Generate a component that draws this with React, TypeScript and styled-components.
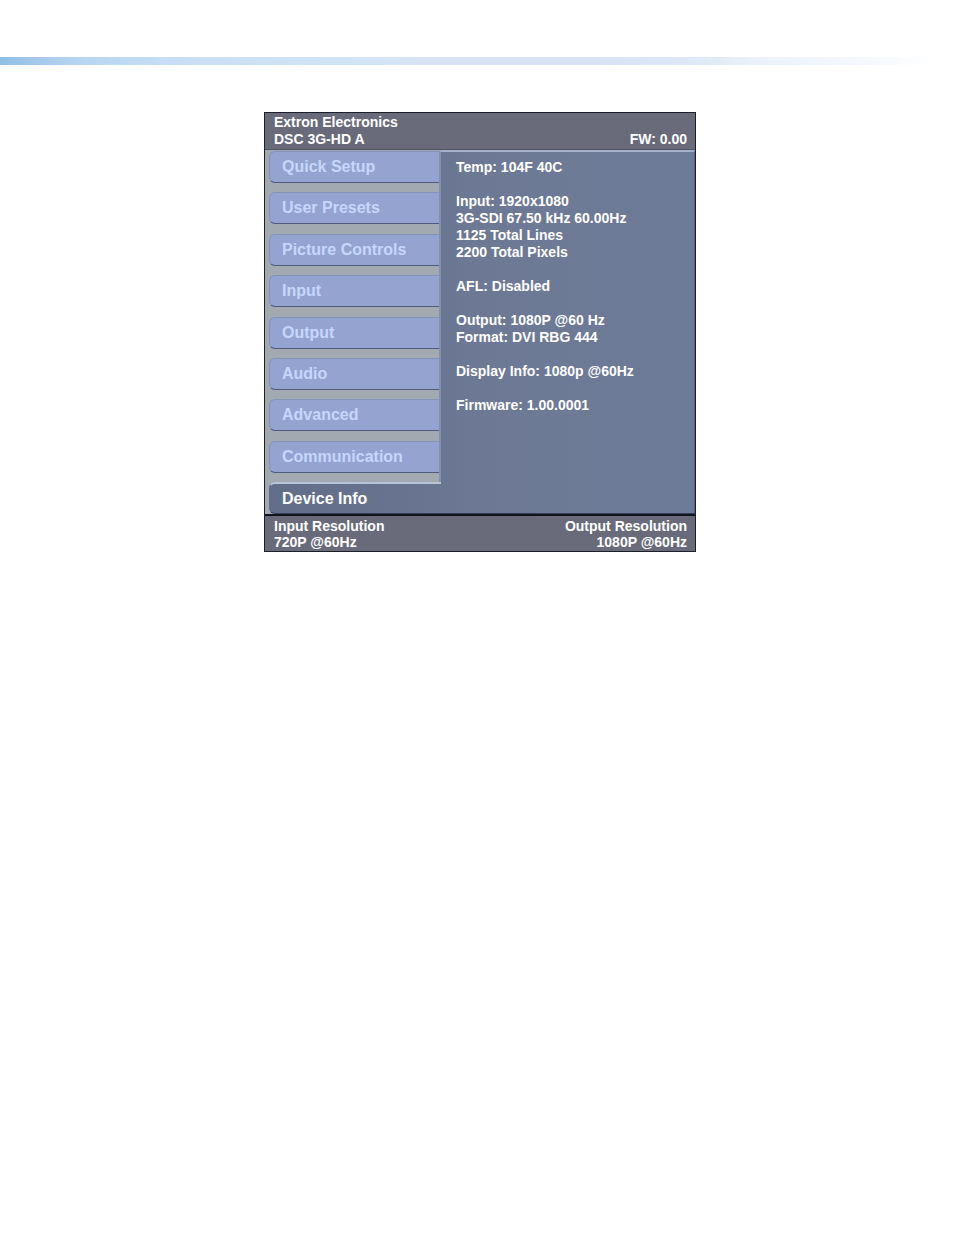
import { useState } from "react";
import styled, { createGlobalStyle } from "styled-components";

const GlobalStyle = createGlobalStyle`
  * {
    box-sizing: border-box;
  }

  body {
    margin: 0;
    background: #ffffff;
    font-family: "Liberation Sans", Arial, sans-serif;
  }
`;

const Page = styled.main`
  padding: 57px 0 48px;
`;

const TopBand = styled.div`
  height: 8px;
  background: linear-gradient(
    to right,
    #8fbfe5 0%,
    #a6c9eb 4%,
    #bad7f1 9%,
    #cadff4 20%,
    #d0e4f6 35%,
    #d8e4f5 45%,
    #d8e3f5 62%,
    #dce8f6 72%,
    #ebf2fb 80%,
    #f6faff 92%,
    #ffffff 98%
  );
`;

const Content = styled.div`
  display: flex;
  justify-content: center;
  padding: 47px 8px 0 14px;
`;

const Screen = styled.section`
  width: 100%;
  max-width: 432px;
  border: 1px solid #1c202a;
  background: #a3a9b0;
  color: #ffffff;
  font-size: 14px;
  font-weight: bold;
  line-height: 17px;
`;

const Header = styled.header`
  display: flex;
  justify-content: space-between;
  align-items: flex-end;
  padding: 1px 8px 1px 9px;
  border-bottom: 1px solid #4f5362;
  background: #696b7b;
`;

const Body = styled.div`
  display: flex;
  min-height: 364px;
  padding-left: 4px;
`;

const Menu = styled.nav`
  display: flex;
  flex-direction: column;
  justify-content: space-between;
  width: 170px;
  flex-shrink: 0;
  padding-top: 1px;
`;

const MenuButton = styled.button<{ $active: boolean }>`
  position: relative;
  height: 32px;
  margin-right: ${(p) => (p.$active ? "-2px" : "0")};
  padding: 0 12px;
  border: 1px solid ${(p) => (p.$active ? "#626d89" : "#8493bd")};
  border-top: ${(p) => (p.$active ? "2px solid #b9c3d8" : "1px solid #8392b8")};
  border-bottom-color: ${(p) => (p.$active ? "#35405a" : "#4f5a7c")};
  border-right: 0;
  border-radius: 6px 0 0 6px;
  background: ${(p) =>
    p.$active ? "linear-gradient(to right, #626d89, #6a7691)" : "#95a3d0"};
  color: ${(p) => (p.$active ? "#ffffff" : "#c5d7fb")};
  font-family: inherit;
  font-size: 16px;
  font-weight: bold;
  text-align: left;
  cursor: pointer;
`;

const Panel = styled.div`
  flex: 1;
  padding: 7px 8px 6px 15px;
  border-top: 2px solid #a3b0c9;
  border-left: 2px solid #8491ad;
  border-right: 1px solid #56627e;
  border-bottom: 1px solid #35405a;
  background: linear-gradient(to right, #6a7691 0, #6d7994 24px, #6e7b98 100%);
`;

const InfoGroup = styled.p`
  margin: 0 0 17px;
`;

const Line = styled.span`
  display: block;
`;

const Footer = styled.footer`
  display: flex;
  justify-content: space-between;
  padding: 2px 8px 1px 9px;
  border-top: 2px solid #10141c;
  background: #696b7b;
  line-height: 16px;
`;

const Status = styled.div<{ $right?: boolean }>`
  text-align: ${(p) => (p.$right ? "right" : "left")};
`;

const menuItems = [
  "Quick Setup",
  "User Presets",
  "Picture Controls",
  "Input",
  "Output",
  "Audio",
  "Advanced",
  "Communication",
  "Device Info",
];

const deviceInfo = [
  ["Temp: 104F 40C"],
  [
    "Input: 1920x1080",
    "3G-SDI 67.50 kHz 60.00Hz",
    "1125 Total Lines",
    "2200 Total Pixels",
  ],
  ["AFL: Disabled"],
  ["Output: 1080P @60 Hz", "Format: DVI RBG 444"],
  ["Display Info: 1080p @60Hz"],
  ["Firmware: 1.00.0001"],
];

function App() {
  const [active, setActive] = useState("Device Info");

  return (
    <>
      <GlobalStyle />
      <Page>
        <TopBand />
        <Content>
          <Screen>
            <Header>
              <div>
                <Line>Extron Electronics</Line>
                <Line>DSC 3G-HD A</Line>
              </div>
              <div>FW: 0.00</div>
            </Header>
            <Body>
              <Menu>
                {menuItems.map((item) => (
                  <MenuButton
                    key={item}
                    type="button"
                    $active={item === active}
                    onClick={() => setActive(item)}
                  >
                    {item}
                  </MenuButton>
                ))}
              </Menu>
              <Panel>
                {deviceInfo.map((group) => (
                  <InfoGroup key={group[0]}>
                    {group.map((text) => (
                      <Line key={text}>{text}</Line>
                    ))}
                  </InfoGroup>
                ))}
              </Panel>
            </Body>
            <Footer>
              <Status>
                <Line>Input Resolution</Line>
                <Line>720P @60Hz</Line>
              </Status>
              <Status $right>
                <Line>Output Resolution</Line>
                <Line>1080P @60Hz</Line>
              </Status>
            </Footer>
          </Screen>
        </Content>
      </Page>
    </>
  );
}

export default App;
